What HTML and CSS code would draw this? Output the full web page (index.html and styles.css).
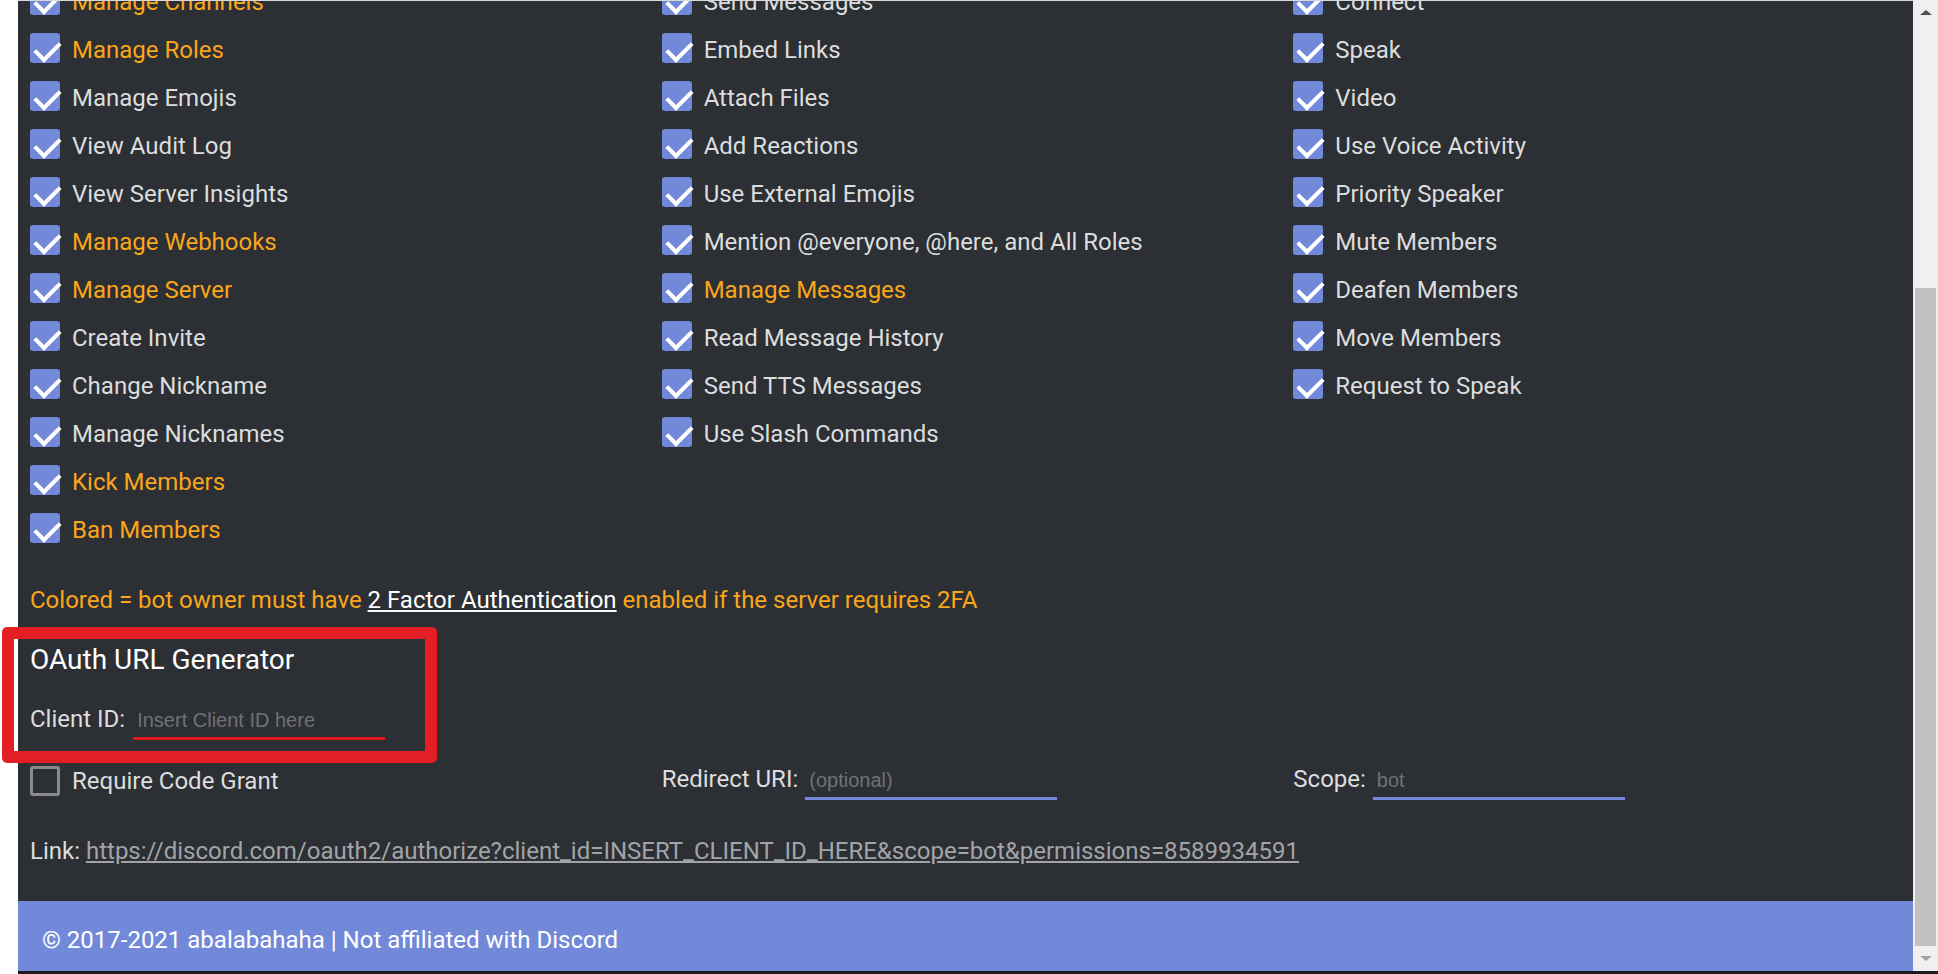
FILE: index.html
```html
<!DOCTYPE html>
<html lang="en">
<head>
<meta charset="utf-8">
<title>Discord Permissions Calculator</title>
<link rel="stylesheet" href="styles.css">
</head>
<body>
<div class="window">
  <div class="row">
    <div class="page">
      <main class="main">
        <div class="perms">
          <ul class="col">
            <li class="perm req"><span class="cb on"></span>Manage Channels</li>
            <li class="perm req"><span class="cb on"></span>Manage Roles</li>
            <li class="perm"><span class="cb on"></span>Manage Emojis</li>
            <li class="perm"><span class="cb on"></span>View Audit Log</li>
            <li class="perm"><span class="cb on"></span>View Server Insights</li>
            <li class="perm req"><span class="cb on"></span>Manage Webhooks</li>
            <li class="perm req"><span class="cb on"></span>Manage Server</li>
            <li class="perm"><span class="cb on"></span>Create Invite</li>
            <li class="perm"><span class="cb on"></span>Change Nickname</li>
            <li class="perm"><span class="cb on"></span>Manage Nicknames</li>
            <li class="perm req"><span class="cb on"></span>Kick Members</li>
            <li class="perm req"><span class="cb on"></span>Ban Members</li>
          </ul>
          <ul class="col">
            <li class="perm"><span class="cb on"></span>Send Messages</li>
            <li class="perm"><span class="cb on"></span>Embed Links</li>
            <li class="perm"><span class="cb on"></span>Attach Files</li>
            <li class="perm"><span class="cb on"></span>Add Reactions</li>
            <li class="perm"><span class="cb on"></span>Use External Emojis</li>
            <li class="perm"><span class="cb on"></span>Mention @everyone, @here, and All Roles</li>
            <li class="perm req"><span class="cb on"></span>Manage Messages</li>
            <li class="perm"><span class="cb on"></span>Read Message History</li>
            <li class="perm"><span class="cb on"></span>Send TTS Messages</li>
            <li class="perm"><span class="cb on"></span>Use Slash Commands</li>
          </ul>
          <ul class="col">
            <li class="perm"><span class="cb on"></span>Connect</li>
            <li class="perm"><span class="cb on"></span>Speak</li>
            <li class="perm"><span class="cb on"></span>Video</li>
            <li class="perm"><span class="cb on"></span>Use Voice Activity</li>
            <li class="perm"><span class="cb on"></span>Priority Speaker</li>
            <li class="perm"><span class="cb on"></span>Mute Members</li>
            <li class="perm"><span class="cb on"></span>Deafen Members</li>
            <li class="perm"><span class="cb on"></span>Move Members</li>
            <li class="perm"><span class="cb on"></span>Request to Speak</li>
          </ul>
        </div>
        <p class="note">Colored = bot owner must have <a class="note-link" href="#">2 Factor Authentication</a> enabled if the server requires 2FA</p>
        <h2 class="title">OAuth URL Generator</h2>
        <div class="field"><label class="lbl">Client ID:</label><input class="uline uline-red" type="text" placeholder="Insert Client ID here"></div>
        <div class="opts">
          <div class="opt chk"><span class="cb"></span>Require Code Grant</div>
          <div class="opt field"><label class="lbl">Redirect URI:</label><input class="uline" type="text" placeholder="(optional)"></div>
          <div class="opt field"><label class="lbl">Scope:</label><input class="uline" type="text" placeholder="bot"></div>
        </div>
        <p class="link">Link: <a class="url" href="#">https://discord.com/oauth2/authorize?client_id=INSERT_CLIENT_ID_HERE&amp;scope=bot&amp;permissions=8589934591</a></p>
      </main>
      <footer class="footer">© 2017-2021 abalabahaha | Not affiliated with Discord</footer>
    </div>
    <div class="scrollbar">
      <div class="sb-btn"><span class="arrow-up"></span></div>
      <div class="sb-track"><div class="sb-thumb"></div></div>
      <div class="sb-btn"><span class="arrow-down"></span></div>
    </div>
  </div>
  <div class="taskline"></div>
</div>
<div class="annot"></div>
</body>
</html>
```
FILE: styles.css
```css
* { box-sizing: border-box; }

html, body {
  margin: 0;
  padding: 0;
  height: 974px;
  overflow: hidden;
  background: #ffffff;
}

body {
  position: relative;
  font-family: Roboto, "Noto Sans", "Liberation Sans", sans-serif;
  font-size: 24px;
  color: #dcddde;
}

.window {
  display: flex;
  flex-direction: column;
  height: 974px;
}

.row {
  display: flex;
  height: 971px;
}

.page {
  flex: 1;
  display: flex;
  flex-direction: column;
  margin-left: 18px;
  min-width: 0;
}

.main {
  flex: 1;
  background: #2c2f33;
  border-top: 1px solid #d8d8d8;
  overflow: hidden;
}

.perms {
  display: grid;
  grid-template-columns: 1fr 1fr 1fr;
  margin-top: -23px;
}

.col {
  list-style: none;
  margin: 0;
  padding: 0 0 0 12px;
}

.perm {
  height: 48px;
  display: flex;
  align-items: center;
  gap: 12px;
  line-height: 36px;
  white-space: nowrap;
}

.perm.req { color: #faa61a; }

.cb {
  position: relative;
  flex: none;
  width: 30px;
  height: 30px;
  border-radius: 3px;
  border: 3px solid #8a8a8a;
}

.cb.on {
  background: #7289da;
  border: none;
  margin-bottom: 4px;
}

.cb.on::after {
  content: "";
  position: absolute;
  left: 10px;
  top: 3px;
  width: 11px;
  height: 21px;
  border-right: 4px solid #ffffff;
  border-bottom: 4px solid #ffffff;
  transform: rotate(45deg);
}

.note {
  margin: 28px 0 0;
  padding-left: 12px;
  line-height: 36px;
  color: #faa61a;
}

.note-link {
  color: #ffffff;
  text-decoration: underline;
}

.title {
  margin: 24px 0 0;
  padding-left: 12px;
  font-size: 28px;
  font-weight: 400;
  line-height: 36px;
  color: #ffffff;
}

.field {
  margin-top: 23px;
  padding-left: 12px;
  line-height: 36px;
}

.lbl { color: #dcddde; }

.uline {
  width: 252px;
  margin: 0 0 0 7px;
  padding: 3px 4px 5px;
  background: transparent;
  border: none;
  border-bottom: 3px solid #7289da;
  font-family: "Liberation Sans", Arial, sans-serif;
  font-size: 20px;
  color: #dcddde;
  outline: none;
  vertical-align: baseline;
}

.uline-red {
  margin-left: 8px;
  border-bottom-color: #e01b1e;
}

.uline::placeholder { color: #707274; }

.opts {
  display: grid;
  grid-template-columns: 1fr 1fr 1fr;
  margin-top: 21px;
}

.opt.field {
  margin-top: 0;
}

.chk {
  display: flex;
  align-items: center;
  gap: 12px;
  padding-left: 12px;
  line-height: 36px;
}

.link {
  margin: 33px 0 0;
  padding-left: 12px;
  line-height: 36px;
  white-space: nowrap;
}

.url {
  color: #a2a4a7;
  text-decoration: underline;
}

.footer {
  height: 70px;
  flex: none;
  background: #7289da;
  color: #ffffff;
  padding: 21px 0 0 24px;
  line-height: 36px;
}

.scrollbar {
  width: 25px;
  flex: none;
  display: flex;
  flex-direction: column;
  background: #f0f0f0;
}

.sb-btn {
  height: 25px;
  flex: none;
  display: flex;
  align-items: center;
  justify-content: center;
}

.arrow-up {
  width: 0;
  height: 0;
  border-left: 6px solid transparent;
  border-right: 6px solid transparent;
  border-bottom: 5px solid #505050;
}

.arrow-down {
  width: 0;
  height: 0;
  border-left: 6px solid transparent;
  border-right: 6px solid transparent;
  border-top: 5px solid #a3a3a3;
}

.sb-track {
  flex: 1;
  padding: 263px 2px 0;
}

.sb-thumb {
  height: 658px;
  background: #c1c1c1;
}

.taskline {
  height: 3px;
  margin-left: 18px;
  background: #1c1c1e;
}

.annot {
  position: absolute;
  left: 2px;
  top: 627px;
  width: 435px;
  height: 136px;
  border: 12px solid #e31e24;
  border-radius: 5px;
  pointer-events: none;
}
```
